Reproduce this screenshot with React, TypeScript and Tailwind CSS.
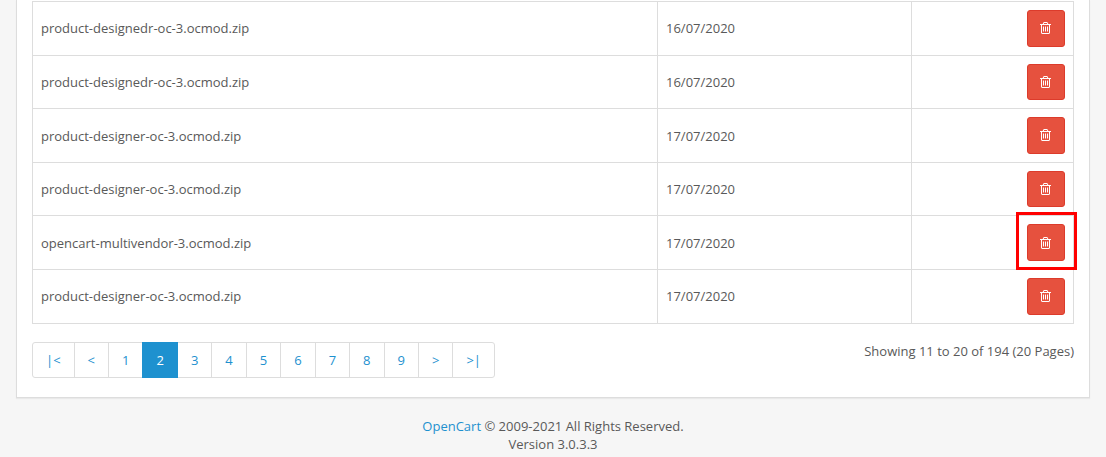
import React from 'react';

const rows = [
  { name: 'product-designedr-oc-3.ocmod.zip', date: '16/07/2020' },
  { name: 'product-designedr-oc-3.ocmod.zip', date: '16/07/2020' },
  { name: 'product-designer-oc-3.ocmod.zip', date: '17/07/2020' },
  { name: 'product-designer-oc-3.ocmod.zip', date: '17/07/2020' },
  { name: 'opencart-multivendor-3.ocmod.zip', date: '17/07/2020', marked: true },
  { name: 'product-designer-oc-3.ocmod.zip', date: '17/07/2020' },
];

const pages = ['|<', '<', '1', '2', '3', '4', '5', '6', '7', '8', '9', '>', '>|'];

const TrashIcon = () => (
  <svg viewBox="0 0 1408 1792" className="w-[11px] h-[14px] mt-[2px] -ml-px" fill="currentColor">
    <path d="M512 608v576q0 14-9 23t-23 9h-64q-14 0-23-9t-9-23v-576q0-14 9-23t23-9h64q14 0 23 9t9 23zm256 0v576q0 14-9 23t-23 9h-64q-14 0-23-9t-9-23v-576q0-14 9-23t23-9h64q14 0 23 9t9 23zm256 0v576q0 14-9 23t-23 9h-64q-14 0-23-9t-9-23v-576q0-14 9-23t23-9h64q14 0 23 9t9 23zm128 724v-948h-896v948q0 22 7 40.5t14.5 27 10.5 8.5h832q3 0 10.5-8.5t14.5-27 7-40.5zm-672-1076h448l-48-117q-7-9-17-11h-317q-10 2-17 11zm928 32v64q0 14-9 23t-23 9h-96v948q0 83-47 143.5t-113 60.5h-832q-66 0-113-58.5t-47-141.5v-952h-96q-14 0-23-9t-9-23v-64q0-14 9-23t23-9h309l70-167q15-37 54-63t79-26h320q40 0 79 26t54 63l70 167h309q14 0 23 9t9 23z" />
  </svg>
);

const App = () => {
  return (
    <div className="h-[457px] overflow-hidden bg-[#f6f6f6] font-['Open_Sans',sans-serif] text-[13px] leading-[18.57px] text-[#595959]">
      <div className="mx-4 px-[15px] pt-px pb-[18.4px] bg-white border-x border-b border-[#ddd] shadow-[0_1px_1px_rgba(0,0,0,0.05)]">
        {/* File table */}
        <table className="w-full table-fixed border-collapse">
          <colgroup>
            <col className="w-[625px]" />
            <col className="w-[254px]" />
            <col />
          </colgroup>
          <tbody>
            {rows.map((row, index) => (
              <tr key={index} className="h-[53.6px]">
                <td className="border border-[#ddd] px-2 pt-[0.8px]">{row.name}</td>
                <td className="border border-[#ddd] px-2 pt-[0.8px]">{row.date}</td>
                <td className="border border-[#ddd] px-2 pt-2 align-top">
                  <div className="relative ml-auto w-[38px]">
                    <button className="flex items-center justify-center w-[38px] h-[36.57px] rounded-[3px] border border-[#dc3b2b] bg-[#e6513e] text-white">
                      <TrashIcon />
                    </button>
                    {row.marked && (
                      <div className="absolute -left-[11px] -top-[12px] w-[61px] h-[57.5px] border-[3px] border-[#f00]"></div>
                    )}
                  </div>
                </td>
              </tr>
            ))}
          </tbody>
        </table>

        {/* Pagination */}
        <div className="flex items-start justify-between mt-[18px]">
          <ul className="flex">
            {pages.map((page, index) => (
              <li
                key={index}
                className={`px-[13px] py-2 border -ml-px first:ml-0 first:rounded-l-[3px] last:rounded-r-[3px] ${
                  page === '2'
                    ? 'relative bg-[#1e91cf] border-[#1e91cf] text-white'
                    : 'bg-white border-[#ddd] text-[#1e91cf]'
                }`}
              >
                {page}
              </li>
            ))}
          </ul>
          <div className="text-right">Showing 11 to 20 of 194 (20 Pages)</div>
        </div>
      </div>

      {/* Footer */}
      <footer className="mt-[19px] text-center">
        <a className="text-[#1e91cf]">OpenCart</a> © 2009-2021 All Rights Reserved.
        <br />
        Version 3.0.3.3
      </footer>
    </div>
  );
};

export default App;
